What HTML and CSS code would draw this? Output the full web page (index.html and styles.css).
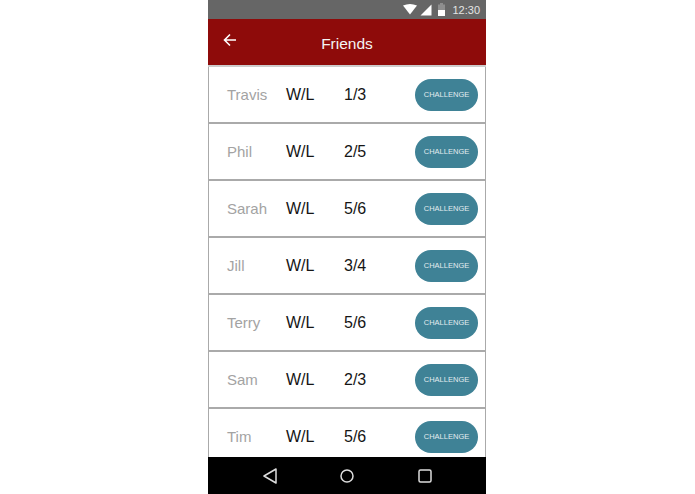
FILE: index.html
```html
<!DOCTYPE html>
<html>
<head>
    <title>Friends</title>
    <link rel="stylesheet" href="styles.css">
</head>
<body>
    <div class="phone">
        <div class="status-bar">
            <svg class="status-icon" width="14" height="11" viewBox="0 0 14 11"><path d="M0 1.500Q7 -1.500 14 1.500L7 10.500Z" fill="#fff"/></svg>
            <svg class="status-icon" width="12" height="12" viewBox="0 0 12 12"><path d="M0.500 11.500L11.500 0.500V11.500Z" fill="#fff"/></svg>
            <svg class="status-icon battery" width="7" height="13" viewBox="0 0 7 13"><path d="M2 0H5V1.500H7V13H0V1.500H2Z" fill="#8e8e8e"/><rect y="7" width="7" height="6" fill="#fff"/></svg>
            <span class="clock">12:30</span>
        </div>
        <div class="header">
            <svg class="back" width="14" height="14" viewBox="0 0 14 14"><path d="M13 7H2M7 1.500L1.500 7L7 12.500" fill="none" stroke="#fff" stroke-width="1.600"/></svg>
            <h1>Friends</h1>
        </div>
        <div class="list">
            <div class="row">
                <span class="name">Travis</span>
                <span class="wl">W/L</span>
                <span class="score">1/3</span>
                <button class="challenge">CHALLENGE</button>
            </div>
            <div class="row">
                <span class="name">Phil</span>
                <span class="wl">W/L</span>
                <span class="score">2/5</span>
                <button class="challenge">CHALLENGE</button>
            </div>
            <div class="row">
                <span class="name">Sarah</span>
                <span class="wl">W/L</span>
                <span class="score">5/6</span>
                <button class="challenge">CHALLENGE</button>
            </div>
            <div class="row">
                <span class="name">Jill</span>
                <span class="wl">W/L</span>
                <span class="score">3/4</span>
                <button class="challenge">CHALLENGE</button>
            </div>
            <div class="row">
                <span class="name">Terry</span>
                <span class="wl">W/L</span>
                <span class="score">5/6</span>
                <button class="challenge">CHALLENGE</button>
            </div>
            <div class="row">
                <span class="name">Sam</span>
                <span class="wl">W/L</span>
                <span class="score">2/3</span>
                <button class="challenge">CHALLENGE</button>
            </div>
            <div class="row">
                <span class="name">Tim</span>
                <span class="wl">W/L</span>
                <span class="score">5/6</span>
                <button class="challenge">CHALLENGE</button>
            </div>
        </div>
        <div class="nav-bar">
            <svg width="14" height="16" viewBox="0 0 14 16"><path d="M13 1L1 8L13 15Z" fill="none" stroke="#ddd" stroke-width="1.500" stroke-linejoin="round"/></svg>
            <svg width="14" height="14" viewBox="0 0 14 14"><circle cx="7" cy="7" r="6" fill="none" stroke="#ddd" stroke-width="1.500"/></svg>
            <svg class="nav-square" width="14" height="14" viewBox="0 0 14 14"><rect x="1" y="1" width="12" height="12" rx="1.500" fill="none" stroke="#ddd" stroke-width="1.500"/></svg>
        </div>
    </div>
</body>
</html>
```

FILE: styles.css
```css
html, body {
    height: 100%;
}
body {
    margin: 0;
    background-color: white;
    font-family: "Liberation Sans", Arial, sans-serif;
    display: flex;
    justify-content: center;
}
.phone {
    width: 278px;
    height: 494px;
    margin-right: 1px;
    display: flex;
    flex-direction: column;
    overflow: hidden;
}
.status-bar {
    height: 19px;
    flex-shrink: 0;
    box-sizing: border-box;
    background-color: #666;
    display: flex;
    align-items: center;
    justify-content: flex-end;
    padding-right: 6px;
}
.status-icon {
    margin-right: 3px;
}
.battery {
    margin-left: 3px;
    margin-right: 7px;
}
.clock {
    color: #e4e4e4;
    font-size: 11px;
}
.header {
    height: 48px;
    flex-shrink: 0;
    box-sizing: border-box;
    background-color: #8e0b0a;
    border-bottom: 2px solid #ccc;
    position: relative;
    display: flex;
    align-items: center;
    justify-content: center;
}
.header h1 {
    margin: 0;
    padding-top: 3px;
    color: #f4f4f4;
    font-size: 15.500px;
    font-weight: normal;
}
.back {
    position: absolute;
    left: 15px;
    top: 14px;
}
.list {
    flex: 1;
    min-height: 0;
    overflow: hidden;
    box-sizing: border-box;
    background-color: white;
    border-left: 1px solid #aaa;
    border-right: 1px solid #aaa;
}
.row {
    height: 57px;
    box-sizing: border-box;
    border-bottom: 2px solid #aaa;
    display: flex;
    align-items: center;
    padding-left: 18px;
}
.name {
    width: 59px;
    color: #a3a3a3;
    font-size: 15px;
}
.wl {
    width: 58px;
    color: #151515;
    font-size: 16px;
}
.score {
    width: 71px;
    color: #151515;
    font-size: 16px;
}
.challenge {
    width: 63px;
    height: 32px;
    padding: 0;
    border: none;
    border-radius: 16px;
    background-color: #3f8296;
    color: #e2ecef;
    font-family: inherit;
    font-size: 7.500px;
}
.nav-bar {
    height: 37px;
    flex-shrink: 0;
    background-color: black;
    display: flex;
    align-items: center;
    justify-content: center;
    gap: 63px;
}
.nav-square {
    margin-left: 1px;
}
```
